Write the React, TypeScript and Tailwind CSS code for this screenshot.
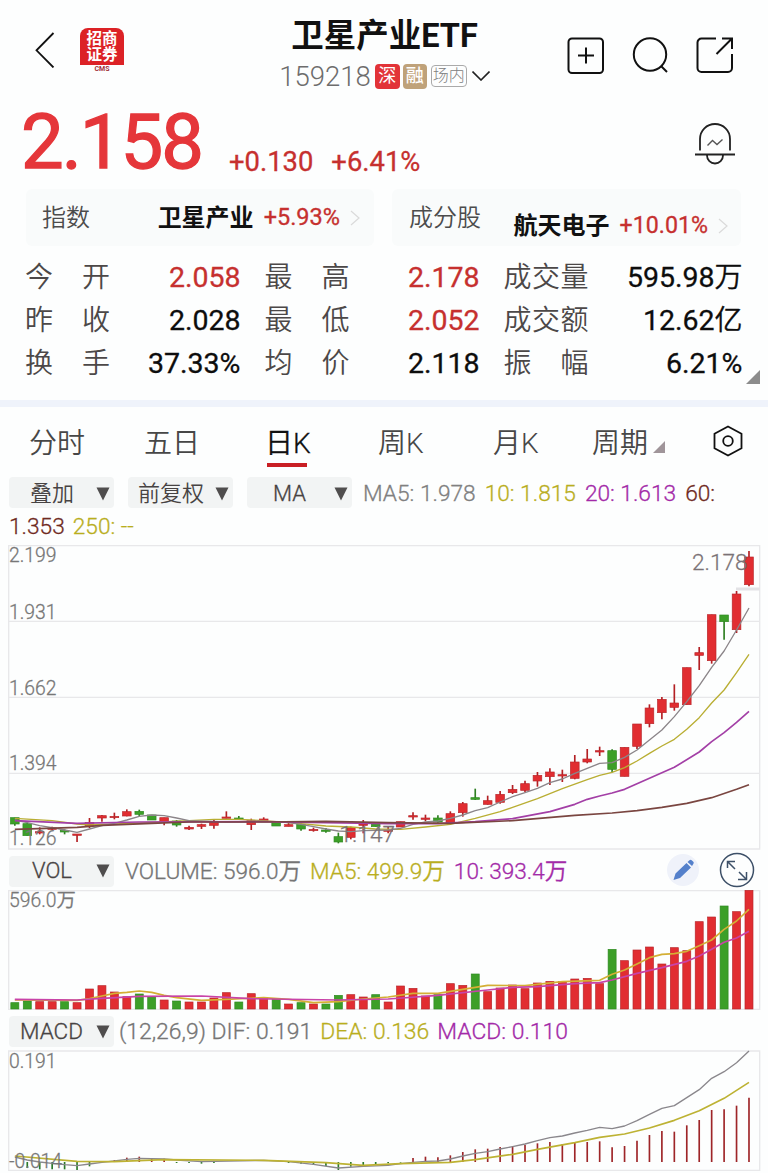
import type { ReactNode } from 'react';

type Candle = [high: number, top: number, bottom: number, low: number];
type Point = [index: number, y: number];

const RED = '#e12d31';
const GREEN = '#3c9f28';

// Chart space is three units per css pixel
const STEP = 37.33;
const cx = (i: number) => 44.5 + i * STEP;

const FALLING = new Set([0, 1, 4, 10, 11, 13, 18, 21, 23, 25, 26, 29, 34, 37, 48, 57]);

const CANDLES: Candle[] = [
  [833, 833, 852, 857], [848, 851, 887, 887], [862, 875, 879, 883], [860, 864, 867, 870],
  [868, 871, 876, 883], [882, 882, 885, 906], [834, 847, 858, 864], [825, 827, 834, 845],
  [818, 829, 832, 838], [808, 815, 828, 829], [809, 814, 823, 829], [825, 825, 840, 840],
  [833, 833, 846, 856], [840, 843, 855, 860], [857, 862, 867, 870], [851, 854, 859, 867],
  [840, 844, 856, 866], [814, 831, 835, 835], [828, 834, 839, 840], [836, 842, 854, 870],
  [832, 837, 841, 844], [847, 847, 858, 858], [848, 854, 859, 859], [850, 853, 867, 872],
  [863, 868, 871, 875], [864, 870, 874, 878], [878, 890, 906, 910], [860, 863, 892, 898],
  [840, 852, 855, 880], [847, 847, 860, 860], [860, 870, 873, 880], [845, 845, 861, 861],
  [817, 827, 831, 839], [824, 834, 837, 844], [826, 834, 846, 848], [814, 821, 851, 853],
  [786, 791, 818, 830], [746, 773, 778, 780], [767, 782, 793, 794], [753, 763, 787, 791],
  [735, 748, 758, 762], [722, 731, 751, 757], [696, 706, 723, 740], [685, 696, 710, 735],
  [689, 704, 708, 726], [645, 666, 715, 718], [627, 657, 666, 670], [620, 632, 635, 648],
  [628, 632, 688, 697], [622, 622, 709, 709], [552, 552, 619, 627], [493, 504, 551, 562],
  [471, 478, 518, 538], [433, 489, 502, 512], [383, 383, 494, 494], [321, 338, 346, 390],
  [224, 224, 362, 371], [225, 225, 245, 299], [153, 162, 269, 279], [33, 51, 134, 139],
];

const MA5: Point[] = [
  [0, 840], [1, 848], [2, 857], [3, 863], [4, 870], [5, 877], [6, 867], [7, 857], [8, 850], [9, 840],
  [10, 829], [11, 825], [12, 827], [13, 834], [14, 842], [17, 846], [20, 844], [22, 848], [23, 853],
  [24, 860], [25, 867], [26, 873], [27, 875], [28, 872], [30, 870], [31, 865], [32, 853], [33, 846],
  [34, 843], [35, 835], [36, 825], [37, 812], [38, 803], [39, 786], [40, 770], [41, 758], [42, 745],
  [43, 728], [44, 717], [45, 700], [46, 685], [47, 670], [48, 668], [49, 652], [50, 630], [51, 600],
  [52, 570], [53, 530], [54, 485], [55, 437], [56, 382], [57, 333], [58, 270], [59, 204],
];
const MA10: Point[] = [
  [0, 835], [3, 842], [5, 852], [6, 855], [10, 849], [14, 842], [16, 838], [18, 838], [20, 842],
  [23, 851], [25, 858], [27, 861], [29, 867], [31, 868], [33, 861], [35, 853], [37, 835], [39, 815],
  [40, 802], [42, 776], [44, 746], [46, 719], [47, 706], [48, 697], [49, 683], [50, 663], [51, 640],
  [52, 618], [53, 598], [54, 568], [55, 533], [56, 489], [57, 450], [58, 398], [59, 343],
];
const MA20: Point[] = [
  [0, 842], [5, 850], [10, 846], [20, 845], [25, 848], [30, 851], [34, 851], [37, 845], [40, 836],
  [43, 815], [45, 793], [46, 778], [47, 768], [48, 759], [49, 748], [50, 731], [51, 715], [53, 682],
  [55, 636], [56, 605], [57, 578], [58, 547], [59, 514],
];
const MA60: Point[] = [
  [0, 868], [5, 862], [7, 856], [11, 850], [14, 846], [20, 846], [25, 844], [30, 848], [35, 850],
  [40, 842], [45, 826], [48, 819], [50, 812], [52, 802], [54, 790], [56, 773], [58, 748], [59, 734],
];

const VOLUMES = [
  668, 663, 665, 665, 665, 668, 627, 617, 636, 650, 642, 649, 660, 663, 666, 666, 654, 638, 666, 641,
  652, 657, 672, 668, 672, 672, 646, 644, 651, 644, 666, 618, 625, 648, 644, 611, 616, 582, 635, 624,
  615, 626, 609, 604, 604, 597, 595, 611, 508, 542, 510, 501, 552, 503, 512, 425, 411, 378, 395, 331,
];
const VOL_MA5: Point[] = [
  [0, 660], [5, 661], [6, 656], [7, 648], [8, 640], [9, 637], [10, 633], [11, 637], [12, 646], [13, 653],
  [15, 661], [17, 658], [20, 653], [22, 658], [24, 668], [26, 665], [28, 657], [30, 651], [32, 640],
  [34, 640], [36, 628], [38, 616], [41, 617], [44, 605], [47, 601], [48, 583], [49, 570], [50, 552],
  [51, 533], [52, 523], [53, 521], [54, 514], [55, 497], [56, 480], [57, 448], [58, 423], [59, 388],
];
const VOL_MA10: Point[] = [
  [0, 658], [5, 660], [7, 655], [10, 649], [15, 648], [19, 656], [26, 660], [30, 657], [34, 646],
  [38, 630], [40, 622], [42, 620], [45, 611], [47, 608], [48, 600], [50, 580], [52, 563], [54, 544],
  [55, 528], [56, 508], [57, 487], [58, 474], [59, 454],
];

const MACD_BARS = [
  456, 474, 478, 478, 478, 480, 469, 456, 450, 443, 440, 444, 446, 459, 459, 461, 459, 456, 456, 456,
  456, 456, 459, 461, 465, 468, 480, 470, 465, 463, 460, 458, 444, 440, 442, 436, 426, 418, 416, 411,
  408, 404, 400, 396, 402, 397, 396, 394, 412, 408, 392, 375, 363, 365, 346, 330, 300, 298, 287, 263,
];
const DIF: Point[] = [
  [0, 441], [1, 450], [2, 456], [3, 460], [4, 464], [5, 467], [6, 462], [7, 457], [8, 453], [9, 448],
  [10, 445], [12, 447], [13, 450], [15, 455], [20, 451], [22, 455], [24, 463], [26, 474], [28, 469],
  [30, 466], [31, 461], [32, 457], [33, 454], [34, 453], [35, 447], [36, 438], [37, 430], [38, 425],
  [39, 417], [40, 410], [41, 402], [42, 392], [43, 383], [44, 378], [45, 369], [46, 361], [47, 352],
  [48, 356], [49, 348], [50, 332], [51, 313], [52, 295], [53, 287], [54, 263], [55, 239], [56, 205],
  [57, 185], [58, 158], [59, 123],
];
const DEA: Point[] = [
  [0, 438], [5, 454], [8, 455], [12, 449], [20, 451], [25, 458], [28, 466], [31, 461], [35, 457],
  [37, 449], [40, 433], [42, 418], [45, 398], [47, 382], [49, 372], [51, 354], [53, 331], [55, 302],
  [57, 265], [59, 217],
];

function Line({ points, color, width = 4 }: { points: Point[]; color: string; width?: number }) {
  return (
    <polyline
      points={points.map(([i, y]) => `${cx(i)},${y}`).join(' ')}
      fill="none"
      stroke={color}
      strokeWidth={width}
      strokeLinejoin="round"
    />
  );
}

function AxisLabel({ x = 27, y, children }: { x?: number; y: number; children: ReactNode }) {
  return (
    <text x={x} y={y} fontSize={58} fill="#777" stroke="#777" strokeWidth={0.8} className="font-[350]">
      {children}
    </text>
  );
}

function PriceChart() {
  return (
    <svg viewBox="0 15 2304 915" className="block h-[305px] w-[768px]">
      <path d="M26 17H2279V927H26Z M26 244H2279 M26 472H2279 M26 700H2279" fill="none" stroke="#e8e8ea" strokeWidth={4} />
      <path d="M2208 147H2279" stroke="#e3e3e6" strokeWidth={9} />
      {CANDLES.map(([high, top, bottom, low], i) => {
        const color = FALLING.has(i) ? GREEN : RED;
        return (
          <g key={i}>
            <path d={`M${cx(i)} ${high}V${low}`} stroke={FALLING.has(i) ? '#2f7f22' : '#b32024'} strokeWidth={5} />
            <rect x={cx(i) - 13} y={top} width={26} height={Math.max(bottom - top, 4)} fill={color} stroke={FALLING.has(i) ? '#2f8a22' : '#b8262a'} strokeWidth={2} />
          </g>
        );
      })}
      <Line points={MA10} color="#b9ae33" />
      <Line points={MA5} color="#8b8589" />
      <Line points={MA20} color="#a33fa6" width={5} />
      <Line points={MA60} color="#7a4641" width={5} />
      <AxisLabel y={66}>2.199</AxisLabel>
      <AxisLabel y={236}>1.931</AxisLabel>
      <AxisLabel y={464}>1.662</AxisLabel>
      <AxisLabel y={690}>1.394</AxisLabel>
      <AxisLabel y={914}>1.126</AxisLabel>
      <text x={2076} y={89} fontSize={68} fill="#7a7275" stroke="#7a7275" strokeWidth={0.8} className="font-light">2.178</text>
      <text x={1018} y={906} fontSize={68} fill="#7a7275" stroke="#7a7275" strokeWidth={0.8} className="font-light">1.147</text>
    </svg>
  );
}

function VolumeChart() {
  return (
    <svg viewBox="0 330 2304 360" className="block h-[120px] w-[768px]">
      <path d="M26 332H2279V688H26Z" fill="none" stroke="#e8e8ea" strokeWidth={4} />
      {VOLUMES.map((top, i) => (
        <rect
          key={i}
          x={cx(i) - 12}
          y={top}
          width={24}
          height={687 - top}
          fill={FALLING.has(i) ? GREEN : RED}
          stroke={FALLING.has(i) ? '#2f8a22' : '#b8262a'}
          strokeWidth={2}
        />
      ))}
      <Line points={VOL_MA5} color="#d4af35" width={5} />
      <Line points={VOL_MA10} color="#c843a8" width={5} />
      <AxisLabel y={381}>596.0万</AxisLabel>
    </svg>
  );
}

function MacdChart() {
  return (
    <svg viewBox="0 120 2304 369" className="block h-[123px] w-[768px]">
      <path d="M26 123H2279V481H26Z" fill="none" stroke="#e8e8ea" strokeWidth={4} />
      {MACD_BARS.map((y, i) => (
        <path key={i} d={`M${cx(i)} 456V${y}`} stroke={y > 456 ? '#2c7a2a' : '#9e2528'} strokeWidth={5} />
      ))}
      <Line points={DIF} color="#8a878c" />
      <Line points={DEA} color="#bdb233" width={5} />
      <AxisLabel y={173}>0.191</AxisLabel>
      <AxisLabel y={475}>-0.014</AxisLabel>
    </svg>
  );
}

function Chip({ children, className }: { children: ReactNode; className: string }) {
  return (
    <div className={`flex h-[31px] w-[105px] shrink-0 items-center justify-between rounded-sm bg-[#f2f4f4] pr-1 text-[#474343] ${className}`}>
      <span>{children}</span>
      <svg viewBox="0 0 14 14" className="size-3.5">
        <path d="M0.5 0.5h13l-6.5 13z" fill="#4f4d4d" />
      </svg>
    </div>
  );
}

function Chevron() {
  return (
    <svg viewBox="0 0 10 16" className="h-4 w-2.5 fill-none stroke-[#dadada]">
      <path d="M1 1l8 7-8 7" strokeWidth="1.2" />
    </svg>
  );
}

interface Stat {
  label: string;
  value: string;
  up?: boolean;
}

const STATS: Stat[][] = [
  [{ label: '今开', value: '2.058', up: true }, { label: '最高', value: '2.178', up: true }, { label: '成交量', value: '595.98万' }],
  [{ label: '昨收', value: '2.028' }, { label: '最低', value: '2.052', up: true }, { label: '成交额', value: '12.62亿' }],
  [{ label: '换手', value: '37.33%' }, { label: '均价', value: '2.118' }, { label: '振幅', value: '6.21%' }],
];

function Header() {
  return (
    <header className="flex h-[100px] items-start">
      <svg viewBox="0 0 20 36" className="mt-8 ml-[35px] h-9 w-5 fill-none stroke-[#111]">
        <path d="M18.5 1L1.5 18.3l17 17.2" strokeWidth="1.8" />
      </svg>
      <div className="mt-7 ml-[25px] flex h-[45px] w-11 flex-col items-center">
        <div className="flex h-[37px] w-11 flex-col items-center justify-center rounded-t-lg bg-[#dc2226] text-[15.5px] leading-4 font-bold text-white">
          <p className="text-center">招商<br />证券</p>
        </div>
        <span className="mt-px text-[7px] leading-[7px] font-bold text-[#a03038]">CMS</span>
      </div>
      <div className="ml-[154px] flex w-[213px] flex-col items-center">
        <h1 className="mt-[18px] text-[32.5px] leading-9 font-bold text-[#111]">卫星产业ETF</h1>
        <div className="mt-2 flex h-7 items-center text-[27.5px] leading-none font-light text-[#6d6d6d]">
          <span className="pt-0.5">159218</span>
          <span className="ml-1 flex h-[25px] w-[25px] items-center justify-center rounded bg-[#e23338] text-[18px] font-normal text-white">深</span>
          <span className="ml-[3px] flex h-[25px] w-6 items-center justify-center rounded bg-[#bfa27a] text-[18px] font-medium text-white">融</span>
          <span className="ml-1 flex h-[22px] w-9 items-center justify-center rounded border border-[#aaa] text-base text-[#808080]">场内</span>
          <svg viewBox="0 0 18 10" className="ml-[5px] h-2.5 w-[18px] fill-none stroke-[#222]">
            <path d="M0.5 0.5L9 9l8.5-8.5" strokeWidth="1.6" />
          </svg>
        </div>
      </div>
      <div className="mt-[37px] ml-[76px] flex gap-[26.500px] text-[#111]">
        <svg viewBox="0 0 38 38" className="h-[38px] w-[38px] fill-none stroke-current stroke-2">
          <rect x="1.5" y="1.5" width="34.5" height="34.5" rx="3.5" />
          <path d="M19 10.5v16M11 18.5h16" />
        </svg>
        <svg viewBox="0 0 38 38" className="h-[38px] w-[38px] fill-none stroke-current stroke-2">
          <circle cx="18" cy="17.5" r="16.2" />
          <path d="M29 29l6 6" />
        </svg>
        <svg viewBox="0 0 38 38" className="h-[38px] w-[38px] fill-none stroke-current stroke-2">
          <path d="M20 1.5H5.5a4 4 0 00-4 4V31a4 4 0 004 4H32a4 4 0 004-4V17M26 1.5h10v10.500M36 1.5L20.5 17" />
        </svg>
      </div>
    </header>
  );
}

function Quote() {
  return (
    <div className="flex h-[89px] items-start text-[#e5363a]">
      <span className="mt-[2px] ml-[21px] w-[208px] text-[76px] leading-[80px] tracking-[-2px] [-webkit-text-stroke:1.3px_#e5363a]">2.158</span>
      <div className="mt-[46px] flex gap-[18px] text-[27.4px] leading-8 text-[#c6302f] [-webkit-text-stroke:0.3px_#c6302f]">
        <span>+0.130</span>
        <span>+6.41%</span>
      </div>
      <svg viewBox="0 0 42 44" className="mt-[23px] ml-auto mr-[32px] h-11 w-[42px] fill-none stroke-[#222] stroke-[1.8]">
        <path d="M6 27.5V16a15 15 0 0130 0v11.500M1 31.500h40M13 32.500a8 8 0 0016 0" />
        <path d="M13.500 22.500l5-5 4.500 4 5.500-5" stroke="#555" strokeWidth="1.400" />
      </svg>
    </div>
  );
}

function Related() {
  return (
    <div className="flex h-[57px] gap-[18px] pl-[26px] text-[24px] leading-none">
      <div className="flex w-[348px] items-center rounded-md bg-[#f9fbfb] pr-3.5 pl-4">
        <span className="font-[350] text-[#4c4c4c]">指数</span>
        <span className="ml-auto font-bold text-[#111]">卫星产业</span>
        <span className="ml-2.5 mr-2.5 text-[23.5px] text-[#c6302f] [-webkit-text-stroke:0.3px_#c6302f]">+5.93%</span>
        <Chevron />
      </div>
      <div className="flex w-[349px] items-center rounded-md bg-[#f9fbfb] pr-[13px] pl-[17px]">
        <span className="font-[350] text-[#4c4c4c]">成分股</span>
        <div className="mt-[17px] ml-auto flex items-center">
          <span className="font-bold text-[#111]">航天电子</span>
          <span className="ml-2.5 mr-2.5 text-[23.2px] text-[#c6302f] [-webkit-text-stroke:0.3px_#c6302f]">+10.01%</span>
          <Chevron />
        </div>
      </div>
    </div>
  );
}

function Stats() {
  return (
    <div className="mt-[9px] flex h-[145px] items-start">
      <div className="grid w-[717px] auto-rows-[43px] grid-cols-[215.5px_215px_239px] gap-x-6 pt-px pl-[25px] text-[28px] leading-[43px]">
        {STATS.flat().map(({ label, value, up }) => (
          <div key={label} className="flex h-[43px] items-center justify-between whitespace-nowrap">
            <span className="flex w-[85px] justify-between font-[350] text-[#4c4848]">
              {[...label].map((char) => (
                <span key={char}>{char}</span>
              ))}
            </span>
            <span className={`text-[28.500px] [-webkit-text-stroke:0.3px_currentColor] ${up ? 'text-[#c6302f]' : 'text-[#0d0d0d]'}`}>
              {value.replace(/[万亿]/, '')}
              <span className="text-[28px] font-[350]">{value.match(/[万亿]/)?.[0]}</span>
            </span>
          </div>
        ))}
      </div>
      <svg viewBox="0 0 14 14" className="mt-[115px] ml-[29px] size-3.5">
        <path d="M14 0v14H0z" fill="#8c8c8c" />
      </svg>
    </div>
  );
}

function Tabs() {
  return (
    <nav className="flex h-[70px] items-start pt-4 pl-[29px] text-[28px] leading-[42px] font-[350] text-[#474747]">
      <span className="w-[115px]">分时</span>
      <span className="w-[123px]">五日</span>
      <span className="flex w-[111px] flex-col text-[#111]">
        <span className="-ml-0.5 h-10 [-webkit-text-stroke:0.3px_#111]">日K</span>
        <span className="h-1 w-10 bg-[#c91f24]" />
      </span>
      <span className="w-[115px]">周K</span>
      <span className="w-[99px]">月K</span>
      <span>周期</span>
      <svg viewBox="0 0 12 12" className="mt-[18px] ml-[5px] size-3">
        <path d="M12 0v12H0z" fill="#a0959a" />
      </svg>
      <svg viewBox="0 0 30 32" className="mt-0.5 ml-auto mr-[25px] h-8 w-[30px] fill-none stroke-[#111] stroke-[1.8]">
        <path d="M15 1.500l13.500 7.200v14.600L15 30.500 1.500 23.300V8.700z" />
        <circle cx="15" cy="16" r="4.800" />
      </svg>
    </nav>
  );
}

export default function App() {
  return (
    <div className="h-[1173px] w-[768px] overflow-hidden bg-[#fdfefe] font-[Roboto,'Noto_Sans_CJK_SC',sans-serif]">
      <Header />
      <Quote />
      <Related />
      <Stats />
      <div className="h-[7px] bg-[#eff3fb]" />
      <Tabs />

      <div className="flex h-[31px] items-center pl-[9px] text-[22px] leading-none whitespace-nowrap">
        <Chip className="pt-0.5 pl-[21px] font-[350]">叠加</Chip>
        <Chip className="ml-3.5 pt-0.5 pl-2.5 font-[350]">前复权</Chip>
        <Chip className="ml-3.5 pt-0.5 pl-[26px] font-[350] [-webkit-text-stroke:0.3px_currentColor]">MA</Chip>
        <div className="ml-[11px] flex gap-[9px] pt-1 text-[22.7px] font-[350] [-webkit-text-stroke:0.3px_currentColor]">
          <span className="text-[#808080]">MA5: 1.978</span>
          <span className="text-[#b9ae1e]">10: 1.815</span>
          <span className="text-[#a32aa8]">20: 1.613</span>
          <span className="text-[#6f2a22]">60:</span>
        </div>
      </div>
      <div className="flex h-[37px] items-center gap-2 pt-px pl-[9px] text-[22.7px] leading-none font-[350] [-webkit-text-stroke:0.3px_currentColor]">
        <span className="text-[#6f2a22]">1.353</span>
        <span className="text-[#b9ae1e]">250: --</span>
      </div>
      <PriceChart />

      <div className="mt-1 flex h-9 items-center pl-[9px] text-[22px] leading-none whitespace-nowrap">
        <Chip className="mb-0.5 pl-[23px] font-[350] [-webkit-text-stroke:0.3px_currentColor]">VOL</Chip>
        <div className="ml-[11px] flex gap-[9px] text-[22.6px] font-[350] [-webkit-text-stroke:0.3px_currentColor]">
          <span className="text-[#757575]">VOLUME: 596.0万</span>
          <span className="text-[#b9ae1e]">MA5: 499.9万</span>
          <span className="text-[#a32aa8]">10: 393.4万</span>
        </div>
        <svg viewBox="0 0 32 32" className="mb-1 ml-auto size-8">
          <circle cx="16" cy="16" r="16" fill="#eff2fa" />
          <path d="M6.500 26l2-6.500L19.500 9l4.500 4.500L13 24zM20.500 8l2-1.800a1.600 1.600 0 012.200 0l1.600 1.600a1.600 1.600 0 010 2.200L25 12z" fill="#5480cb" />
        </svg>
        <svg viewBox="0 0 36 36" className="mb-[5px] ml-5 mr-[13px] size-9 fill-none stroke-[#3d5068] stroke-[1.500]">
          <circle cx="18" cy="18" r="16.500" />
          <path d="M8.500 16V9.500H16M8.500 9.500L16 17M20 20l7.500 7.500M27.500 20v7.500H19" />
        </svg>
      </div>
      <VolumeChart />

      <div className="flex h-10 items-center pt-[3px] pl-[9px] text-[22px] leading-none whitespace-nowrap">
        <Chip className="pl-[11px] text-[22.5px] font-[350] [-webkit-text-stroke:0.3px_currentColor]">MACD</Chip>
        <div className="ml-[5px] flex gap-2 pt-0.5 text-[22.9px] font-[350] [-webkit-text-stroke:0.3px_currentColor]">
          <span className="text-[#757575]">(12,26,9) DIF: 0.191</span>
          <span className="text-[#b9ae1e]">DEA: 0.136</span>
          <span className="text-[#a32aa8]">MACD: 0.110</span>
        </div>
      </div>
      <MacdChart />
    </div>
  );
}
